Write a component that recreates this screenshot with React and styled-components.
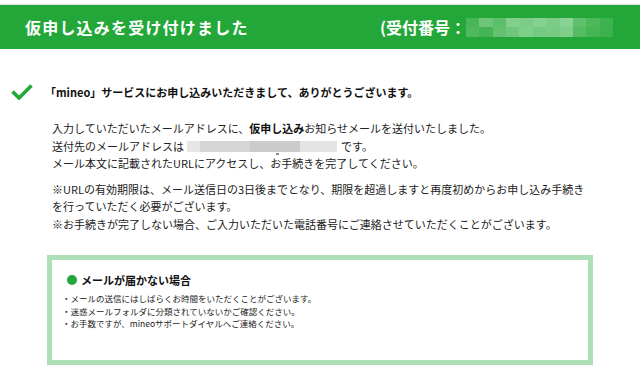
import React from 'react';
import styled, {createGlobalStyle} from 'styled-components';

const GlobalStyle = createGlobalStyle`
    body {
        margin: 0;
        background: #fff;
        font-family: "Noto Sans CJK JP", "Noto Sans", sans-serif;
        color: #222;
    }
`;

const Page = styled.div`
    width: 640px;
    height: 372px;
    overflow: hidden;
    padding-top: 4px;
    box-sizing: border-box;
`;

const Header = styled.header`
    height: 44px;
    border-top: 1px solid #e2e2e2;
    background: #24a739;
    display: flex;
    align-items: center;
    justify-content: space-between;
    padding: 0 27px 0 25px;
    color: #fff;
    font-size: 16px;
    font-weight: 700;
`;

const Title = styled.h1`
    margin: 0;
    font-size: 16px;
    font-weight: 700;
    letter-spacing: 1.2px;
`;

const Receipt = styled.div`
    display: flex;
    align-items: center;
`;

const Mosaic = styled.div`
    display: grid;
    grid-template-columns: repeat(${p => p.cols}, 1fr);
    width: ${p => p.w}px;
    height: ${p => p.h}px;
`;

const Cell = styled.span`
    background: ${p => p.c};
`;

const ThanksRow = styled.div`
    display: flex;
    align-items: center;
    gap: 12px;
    margin: 35px 0 0 11px;
    height: 16px;
`;

const Thanks = styled.p`
    margin: 0;
    font-size: 11px;
    font-weight: 700;
    color: #111;
`;

const Body = styled.div`
    padding: 0 20px 0 52px;
    margin-top: 20px;
`;

const Para = styled.p`
    margin: 0 0 ${p => p.gap || 0}px;
    font-size: 11px;
    line-height: 17.5px;
    white-space: nowrap;
    b {
        font-weight: 700;
        color: #111;
    }
`;

const Email = styled.span`
    display: inline-grid;
    grid-template-columns: 13px 50px 50px 37px;
    height: 11px;
    margin: 0 4px 0 3px;
    vertical-align: -1px;
    position: relative;
`;

const Tail = styled.span`
    position: absolute;
    left: 89px;
    top: 12px;
    width: 3px;
    height: 2px;
    background: #888;
`;

const NoticeBox = styled.section`
    margin: 22px 0 0 47px;
    width: 546px;
    height: 110px;
    box-sizing: border-box;
    border: 5px solid #ade0b6;
    padding: 12px 10px 0 10px;
`;

const NoticeTitle = styled.h2`
    margin: 0 0 4px 5px;
    display: flex;
    align-items: center;
    gap: 4px;
    font-size: 11px;
    font-weight: 700;
    color: #111;
    &::before {
        content: '';
        width: 10px;
        height: 10px;
        border-radius: 50%;
        background: #24a739;
    }
`;

const NoticeList = styled.ul`
    margin: 0;
    padding: 0;
    list-style: none;
    li {
        font-size: 8.5px;
        line-height: 12.5px;
        color: #222;
    }
`;

const Check = () => (
    <svg width="22" height="16" viewBox="0 0 22 16">
        <polyline points="1.5,7.5 8,14 20.5,1.5" fill="none" stroke="#22aa3a" strokeWidth="3.6" />
    </svg>
);

const headerCells = [
    '#48b657', '#6ec67b', '#5cbf6a', '#82d08e', '#7ccd88', '#86d191', '#7acc86', '#88d393', '#60c06e', '#4cb85b', '#3eb24e',
    '#4fb95e', '#45b554', '#63c171', '#6fc77c', '#7ecf89', '#74ca80', '#77cb83', '#7fcf8a', '#56bc64', '#46b655', '#3db14d'
];

const emailCells = ['#e6e6e6', '#d5d5d5', '#cbcbcb', '#e3e3e3'];

const App = () => (
    <>
        <GlobalStyle />
        <Page>
            <Header>
                <Title>仮申し込みを受け付けました</Title>
                <Receipt>
                    <span>(受付番号：</span>
                    <Mosaic cols={11} w={147} h={19}>
                        {headerCells.map((c, i) => <Cell key={i} c={c} />)}
                    </Mosaic>
                </Receipt>
            </Header>
            <ThanksRow>
                <Check />
                <Thanks>「mineo」サービスにお申し込みいただきまして、ありがとうございます。</Thanks>
            </ThanksRow>
            <Body>
                <Para gap={8}>
                    入力していただいたメールアドレスに、<b>仮申し込み</b>お知らせメールを送付いたしました。<br />
                    送付先のメールアドレスは
                    <Email>
                        {emailCells.map((c, i) => <Cell key={i} c={c} />)}
                        <Tail />
                    </Email>
                    です。<br />
                    メール本文に記載されたURLにアクセスし、お手続きを完了してください。
                </Para>
                <Para>
                    ※URLの有効期限は、メール送信日の3日後までとなり、期限を超過しますと再度初めからお申し込み手続き<br />
                    を行っていただく必要がございます。<br />
                    ※お手続きが完了しない場合、ご入力いただいた電話番号にご連絡させていただくことがございます。
                </Para>
            </Body>
            <NoticeBox>
                <NoticeTitle>メールが届かない場合</NoticeTitle>
                <NoticeList>
                    <li>・メールの送信にはしばらくお時間をいただくことがございます。</li>
                    <li>・迷惑メールフォルダに分類されていないかご確認ください。</li>
                    <li>・お手数ですが、mineoサポートダイヤルへご連絡ください。</li>
                </NoticeList>
            </NoticeBox>
        </Page>
    </>
);

export default App;
